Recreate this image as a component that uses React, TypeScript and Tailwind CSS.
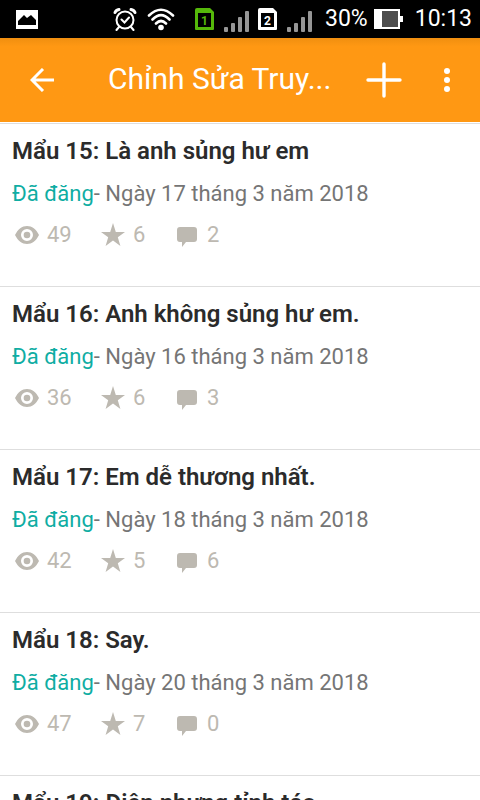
type Chapter = { title: string; date: string; views: number; stars: number; comments: number };

const chapters: Chapter[] = [
  { title: "Mẩu 15: Là anh sủng hư em", date: "Ngày 17 tháng 3 năm 2018", views: 49, stars: 6, comments: 2 },
  { title: "Mẩu 16: Anh không sủng hư em.", date: "Ngày 16 tháng 3 năm 2018", views: 36, stars: 6, comments: 3 },
  { title: "Mẩu 17: Em dễ thương nhất.", date: "Ngày 18 tháng 3 năm 2018", views: 42, stars: 5, comments: 6 },
  { title: "Mẩu 18: Say.", date: "Ngày 20 tháng 3 năm 2018", views: 47, stars: 7, comments: 0 },
  { title: "Mẩu 19: Điên nhưng tỉnh táo.", date: "Ngày 21 tháng 3 năm 2018", views: 40, stars: 6, comments: 1 },
];

function SimIcon({ slot, className }: { slot: string; className: string }) {
  return (
    <span className={`relative flex h-6 w-[19px] items-center justify-center ${className}`}>
      <svg viewBox="0 0 19 24" className="absolute inset-0 h-6 w-[19px]" aria-hidden="true">
        <path fill="currentColor" fillRule="evenodd" d="M2 1h13l4 4v17a1 1 0 0 1-1 1H1a1 1 0 0 1-1-1V3a2 2 0 0 1 2-2ZM3 6v14h13V6Z" />
      </svg>
      <span className="mt-1 text-xs font-bold leading-3">{slot}</span>
    </span>
  );
}

function SignalIcon() {
  return (
    <svg viewBox="0 0 26 24" className="mt-1 h-6 w-[26px]" fill="#969696" aria-hidden="true">
      <rect x="0" y="18" width="4" height="5" rx="1" />
      <rect x="7" y="14" width="4" height="9" rx="1" />
      <rect x="14" y="8" width="4" height="15" rx="1" />
      <rect x="21" y="2" width="4" height="21" rx="1" />
    </svg>
  );
}

function StatusBar() {
  return (
    <div className="flex h-[38px] shrink-0 items-center bg-black pl-4 pr-2 text-[23px] text-white">
      <svg viewBox="0 0 22 19" className="h-[19px] w-[22px]" aria-hidden="true">
        <path fill="currentColor" fillRule="evenodd" d="M0 0h22v19H0ZM2 15h18v-5l-5-5-4 3-3-3-6 6Z" />
      </svg>
      <div className="ml-auto flex items-center">
        <svg viewBox="0 0 24 24" className="h-6 w-6" fill="none" stroke="currentColor" strokeWidth="2" strokeLinecap="round" aria-hidden="true">
          <circle cx="12" cy="13" r="8.500" />
          <path d="m8.500 12.500 3 3 4.500-5M6 20l-2.500 3M18 20l2.500 3" />
          <path strokeWidth="3" d="M2 5.500Q3 3 6 2.500M22 5.500Q21 3 18 2.500" />
        </svg>
        <svg viewBox="0 0 28 24" className="ml-2.5 h-6 w-7" fill="none" stroke="currentColor" strokeWidth="2.600" strokeLinecap="round" aria-hidden="true">
          <path d="M2 8.500Q14-3 26 8.500M5.500 12.500Q14 4 22.500 12.500M9 16.500Q14 11.500 19 16.500" />
          <circle cx="14" cy="20.500" r="2.800" fill="currentColor" stroke="none" />
        </svg>
        <SimIcon slot="1" className="ml-5 text-[#55b80a]" />
        <span className="ml-2.5"><SignalIcon /></span>
        <SimIcon slot="2" className="ml-2 text-white" />
        <span className="ml-2.5"><SignalIcon /></span>
        <span className="ml-3 leading-6">30%</span>
        <svg viewBox="0 0 29 20" className="ml-1.5 h-5 w-[29px]" aria-hidden="true">
          <path fill="currentColor" d="M0 0h26v7h3v6h-3v7H0Z" />
          <path fill="#4d4d4d" d="M8 2h16v16H8Z" />
        </svg>
        <span className="ml-3 leading-6">10:13</span>
      </div>
    </div>
  );
}

function Header() {
  return (
    <header className="flex h-[84px] shrink-0 items-center bg-[#ff9813] bg-linear-to-b from-[#f08f10] to-[#ff9813] to-10% text-white">
      <button type="button" aria-label="Quay lại" className="ml-6 flex h-12 w-9 items-center justify-center">
        <svg viewBox="0 0 24 24" className="h-6 w-6" fill="none" stroke="currentColor" strokeWidth="3" aria-hidden="true">
          <path d="M24 12H3M13 1 2 12l11 11" />
        </svg>
      </button>
      <h1 className="ml-12 mr-8 min-w-0 flex-1 truncate pb-0.5 text-[30px] leading-10">Chỉnh Sửa Truy...</h1>
      <button type="button" aria-label="Thêm" className="flex h-12 w-10 items-center justify-center">
        <svg viewBox="0 0 36 36" className="h-9 w-9" fill="none" stroke="currentColor" strokeWidth="3.400" strokeLinecap="round" aria-hidden="true">
          <path d="M18 2v32M2 18h32" />
        </svg>
      </button>
      <button type="button" aria-label="Tùy chọn khác" className="ml-6 mr-3 flex h-12 w-10 items-center justify-center">
        <svg viewBox="0 0 8 24" className="h-6 w-2" fill="currentColor" aria-hidden="true">
          <circle cx="3" cy="3" r="3" />
          <circle cx="3" cy="12" r="3" />
          <circle cx="3" cy="21" r="3" />
        </svg>
      </button>
    </header>
  );
}

function ChapterRow({ chapter }: { chapter: Chapter }) {
  return (
    <li className="h-[163px] border-t border-[#dedede] px-3 pt-[11px]">
      <h2 className="truncate text-2xl font-semibold leading-8 text-[#2b2b2b]">{chapter.title}</h2>
      <p className="mt-[13px] truncate text-[22px] leading-7 text-[#757575]">
        <span className="text-[#0fada3]">Đã đăng</span>- {chapter.date}
      </p>
      <div className="mt-[13px] flex items-center text-[22px] leading-7 text-[#bdb9b1]">
        <span className="flex w-[89px] items-center">
          <svg viewBox="0 0 26 20" className="ml-0.5 mr-[7px] h-5 w-[26px]" fill="currentColor" aria-hidden="true">
            <path fillRule="evenodd" d="M1 10C4 4 8 1 13 1s9 3 12 9c-3 6-7 9-12 9S4 16 1 10ZM13 4a6 6 0 1 0 0 12 6 6 0 0 0 0-12Z" />
            <circle cx="13" cy="10" r="3.300" />
          </svg>
          {chapter.views}
        </span>
        <span className="flex w-[75px] items-center">
          <svg viewBox="0 0 24 24" className="mr-2 h-6 w-6" fill="currentColor" aria-hidden="true">
            <path d="m12 0 2.800 9H24l-7.200 5.200L19.400 23 12 17.500 4.600 23l2.600-8.800L0 9h9.200Z" />
          </svg>
          {chapter.stars}
        </span>
        <span className="flex items-center">
          <svg viewBox="0 0 21 21" className="mr-2.5 mt-0.5 h-[21px] w-[21px]" fill="currentColor" aria-hidden="true">
            <path d="M4 1h14a3 3 0 0 1 3 3v9a3 3 0 0 1-3 3h-8l-4 5v-5H4a3 3 0 0 1-3-3V4a3 3 0 0 1 3-3Z" />
          </svg>
          {chapter.comments}
        </span>
      </div>
    </li>
  );
}

export default function App() {
  return (
    <div className="flex h-screen flex-col overflow-hidden bg-white font-[Roboto,sans-serif]">
      <StatusBar />
      <Header />
      <main className="min-h-0 flex-1 overflow-y-auto pt-px [scrollbar-width:none]">
        <ul>
          {chapters.map((chapter) => (
            <ChapterRow key={chapter.title} chapter={chapter} />
          ))}
        </ul>
      </main>
    </div>
  );
}
